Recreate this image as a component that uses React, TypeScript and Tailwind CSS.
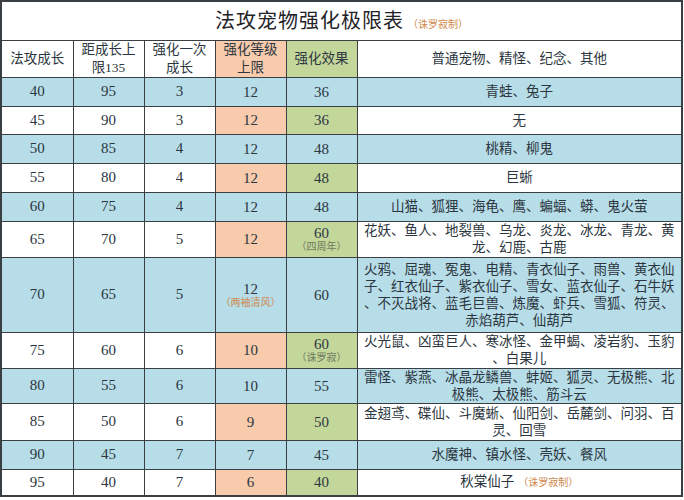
type Row = {
  a: string;
  b: string;
  c: string;
  d: string;
  dNote?: string;
  e: string;
  eNote?: string;
  pets: string[];
  petsNote?: string;
  blue: boolean;
  h: string;
};

const rows: Row[] = [
  { a: "40", b: "95", c: "3", d: "12", e: "36", pets: ["青蛙、兔子"], blue: true, h: "h-[29px]" },
  { a: "45", b: "90", c: "3", d: "12", e: "36", pets: ["无"], blue: false, h: "h-[28px]" },
  { a: "50", b: "85", c: "4", d: "12", e: "48", pets: ["桃精、柳鬼"], blue: true, h: "h-[29px]" },
  { a: "55", b: "80", c: "4", d: "12", e: "48", pets: ["巨蜥"], blue: false, h: "h-[29px]" },
  { a: "60", b: "75", c: "4", d: "12", e: "48", pets: ["山猫、狐狸、海龟、鹰、蝙蝠、蟒、鬼火萤"], blue: true, h: "h-[29px]" },
  {
    a: "65", b: "70", c: "5", d: "12", e: "60", eNote: "（四周年）",
    pets: ["花妖、鱼人、地裂兽、乌龙、炎龙、冰龙、青龙、黄", "龙、幻鹿、古鹿"], blue: false, h: "h-[36px]",
  },
  {
    a: "70", b: "65", c: "5", d: "12", dNote: "（两袖清风）", e: "60",
    pets: [
      "火鸦、屈魂、冤鬼、电精、青衣仙子、雨兽、黄衣仙",
      "子、红衣仙子、紫衣仙子、雪女、蓝衣仙子、石牛妖",
      "、不灭战将、蓝毛巨兽、炼魔、虾兵、雪狐、符灵、",
      "赤焰葫芦、仙葫芦",
    ],
    blue: true, h: "h-[75px]",
  },
  {
    a: "75", b: "60", c: "6", d: "10", e: "60", eNote: "（诛罗寂）",
    pets: ["火光鼠、凶蛮巨人、寒冰怪、金甲蝎、凌岩豹、玉豹", "、白果儿"], blue: false, h: "h-[36px]",
  },
  {
    a: "80", b: "55", c: "6", d: "10", e: "55",
    pets: ["雷怪、紫燕、冰晶龙鳞兽、蚌姬、狐灵、无极熊、北", "极熊、太极熊、筋斗云"], blue: true, h: "h-[35px]",
  },
  {
    a: "85", b: "50", c: "6", d: "9", e: "50",
    pets: ["金翅鸢、碟仙、斗魔蜥、仙阳剑、岳麓剑、问羽、百", "灵、回雪"], blue: false, h: "h-[37px]",
  },
  { a: "90", b: "45", c: "7", d: "7", e: "45", pets: ["水魔神、镇水怪、壳妖、餐风"], blue: true, h: "h-[29px]" },
  { a: "95", b: "40", c: "7", d: "6", e: "40", pets: ["秋棠仙子"], petsNote: "（诛罗寂制）", blue: false, h: "h-[27px]" },
];

const cell = "border border-[#3a3f44] text-center align-middle p-0";

export default function App() {
  return (
    <div className="w-[684px] h-[500px] bg-white text-[#2c3640] font-['Liberation_Serif','Noto_Sans_CJK_SC',serif]">
      <table className="w-[683px] table-fixed border-collapse border-2 border-[#3a3f44]">
        <colgroup>
          <col className="w-[72px]" />
          <col className="w-[71px]" />
          <col className="w-[71px]" />
          <col className="w-[71px]" />
          <col className="w-[71px]" />
          <col />
        </colgroup>
        <tbody>
          <tr className="h-[39px]">
            <td colSpan={6} className={cell}>
              <span className="text-[20px] tracking-[1px] text-[#1f2328]">法攻宠物强化极限表</span>
              <span className="text-[10px] text-[#d08a4e] ml-1">（诛罗寂制）</span>
            </td>
          </tr>
          <tr className="h-[37px] text-[13.5px] leading-[18px]">
            <td className={cell}>法攻成长</td>
            <td className={cell}>距成长上<br />限135</td>
            <td className={cell}>强化一次<br />成长</td>
            <td className={`${cell} bg-[#f8cbad]`}>强化等级<br />上限</td>
            <td className={`${cell} bg-[#c4d79b]`}>强化效果</td>
            <td className={cell}>普通宠物、精怪、纪念、其他</td>
          </tr>
          {rows.map((r) => {
            const bg = r.blue ? "bg-[#b7dde8]" : "bg-white";
            return (
              <tr key={r.a} className={`${r.h} ${bg} text-[15px]`}>
                <td className={cell}>{r.a}</td>
                <td className={cell}>{r.b}</td>
                <td className={cell}>{r.c}</td>
                <td className={`${cell} ${r.blue ? "" : "bg-[#f8cbad]"}`}>
                  <div className="leading-[16px]">{r.d}</div>
                  {r.dNote && <div className="text-[10px] leading-[12px] text-[#d08a4e]">{r.dNote}</div>}
                </td>
                <td className={`${cell} ${r.blue ? "" : "bg-[#c4d79b]"}`}>
                  <div className="leading-[16px]">{r.e}</div>
                  {r.eNote && <div className="text-[10px] leading-[12px] text-[#6f7a5e]">{r.eNote}</div>}
                </td>
                <td className={`${cell} text-[13.5px] leading-[17px]`}>
                  {r.pets.map((line, i) => (
                    <div key={i} className="whitespace-nowrap">
                      {line}
                      {i === r.pets.length - 1 && r.petsNote && (
                        <span className="text-[10px] text-[#d08a4e] ml-1">{r.petsNote}</span>
                      )}
                    </div>
                  ))}
                </td>
              </tr>
            );
          })}
        </tbody>
      </table>
    </div>
  );
}
